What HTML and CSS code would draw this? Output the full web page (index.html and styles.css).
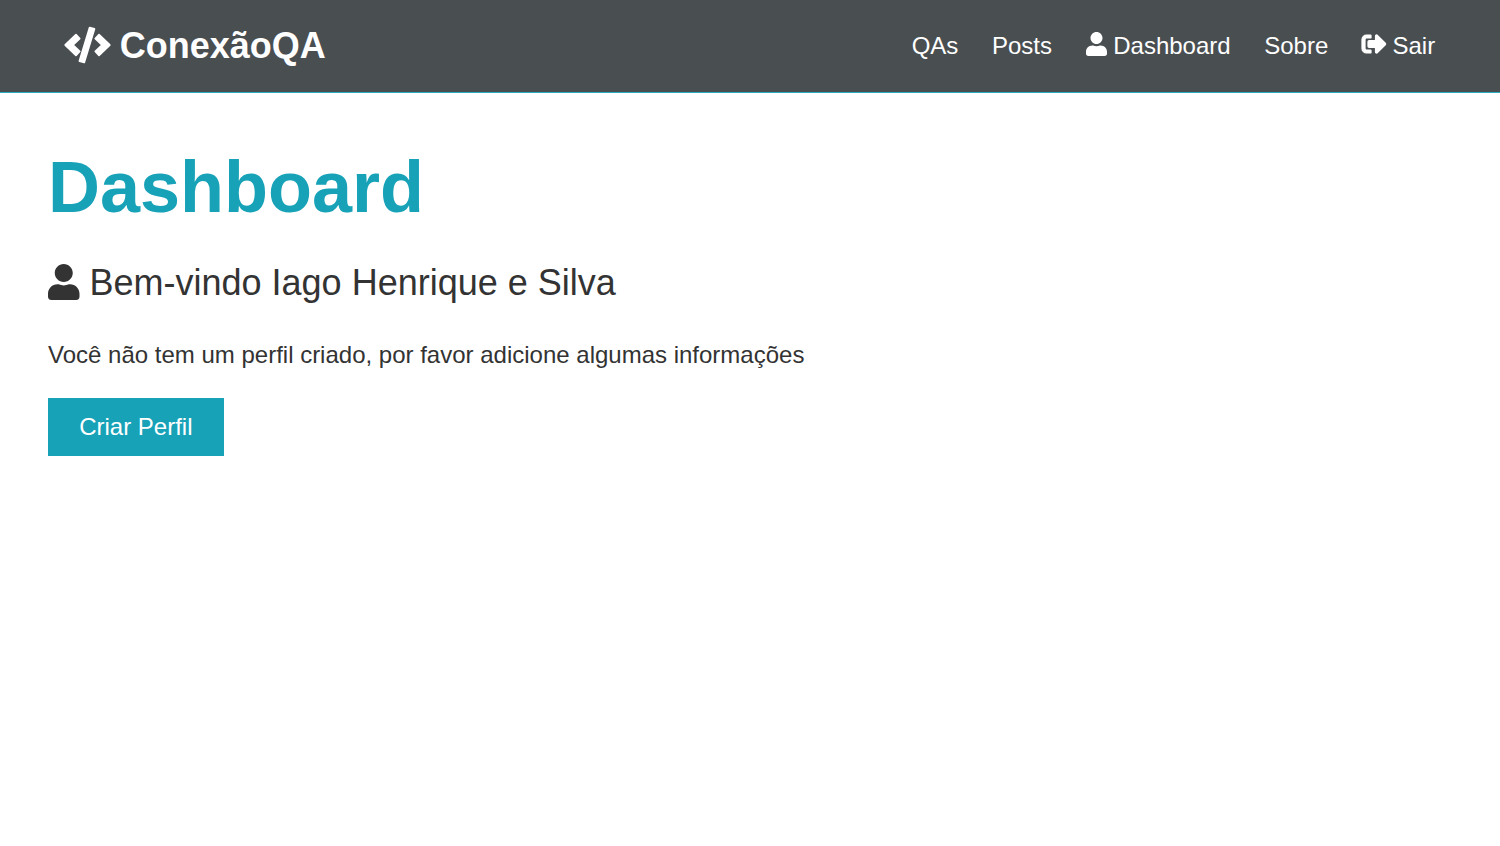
FILE: index.html
```html
<!DOCTYPE html>
<html lang="pt-BR">
<head>
<meta charset="utf-8">
<title>ConexãoQA</title>
<link rel="stylesheet" href="styles.css">
</head>
<body>
<nav class="navbar">
  <h1 class="brand"><a href="#"><svg class="icon icon-code" viewBox="0 0 640 512"><path d="M273 504L206 485L351 8L418 27ZM156 402L4 256L156 110L208 165L111 256L208 347ZM484 402L636 256L484 110L432 165L529 256L432 347Z"/></svg> ConexãoQA</a></h1>
  <ul class="menu">
    <li><a href="#">QAs</a></li>
    <li><a href="#">Posts</a></li>
    <li><a href="#"><svg class="icon icon-user" viewBox="0 0 448 512"><path d="M224 256c70.700 0 128-57.300 128-128S294.700 0 224 0 96 57.300 96 128s57.300 128 128 128zm89.600 32h-16.700c-22.200 10.200-46.900 16-72.900 16s-50.600-5.800-72.900-16h-16.700C60.200 288 0 348.200 0 422.400V464c0 26.500 21.500 48 48 48h352c26.500 0 48-21.500 48-48v-41.600c0-74.200-60.200-134.400-134.400-134.400z"/></svg> Dashboard</a></li>
    <li><a href="#">Sobre</a></li>
    <li><a href="#"><svg class="icon icon-exit" viewBox="0 0 512 512"><path d="M497 273L329 441c-15 15-41 4.500-41-17v-96H152c-13.300 0-24-10.700-24-24v-96c0-13.300 10.700-24 24-24h136V88c0-21.400 25.900-32 41-17l168 168c9.300 9.400 9.300 24.600 0 34zM192 436v-40c0-6.600-5.400-12-12-12H96c-17.700 0-32-14.300-32-32V160c0-17.700 14.300-32 32-32h84c6.600 0 12-5.400 12-12V76c0-6.600-5.400-12-12-12H96c-53 0-96 43-96 96v192c0 53 43 96 96 96h84c6.600 0 12-5.400 12-12z"/></svg> Sair</a></li>
  </ul>
</nav>
<main class="container">
  <h1 class="title">Dashboard</h1>
  <p class="lead"><svg class="icon icon-user" viewBox="0 0 448 512"><path d="M224 256c70.700 0 128-57.300 128-128S294.700 0 224 0 96 57.300 96 128s57.300 128 128 128zm89.600 32h-16.700c-22.200 10.200-46.900 16-72.900 16s-50.600-5.800-72.900-16h-16.700C60.200 288 0 348.200 0 422.400V464c0 26.500 21.500 48 48 48h352c26.500 0 48-21.500 48-48v-41.600c0-74.200-60.200-134.400-134.400-134.400z"/></svg> Bem-vindo Iago Henrique e Silva</p>
  <p class="notice">Você não tem um perfil criado, por favor adicione algumas informações</p>
  <a class="btn" href="#">Criar Perfil</a>
</main>
</body>
</html>
```
FILE: styles.css
```css
* { box-sizing: border-box; margin: 0; padding: 0; }
body {
  font: 24px/1.6 "Liberation Sans", Arial, sans-serif;
  color: #333;
  background: #fff;
}
a { color: inherit; text-decoration: none; }
.icon { display: inline-block; height: 1em; vertical-align: -0.125em; fill: currentColor; overflow: visible; }
.icon-code { width: 1.25em; vertical-align: -0.12em; stroke: currentColor; stroke-width: 26; stroke-linejoin: round; }
.icon-user { width: 0.875em; }
.icon-exit { width: 1em; stroke: currentColor; stroke-width: 26; }
.navbar {
  display: flex;
  justify-content: space-between;
  align-items: center;
  height: 93px;
  padding: 0 48px;
  background: #363b3f;
  color: #fff;
  border-bottom: 1px solid #17a2b8;
  opacity: 0.9;
}
.brand { font-size: 36px; line-height: 57.6px; padding: 0 16.8px; }
.menu { display: flex; list-style: none; }
.menu a { display: block; padding: 0 16.8px; }
.menu .icon { vertical-align: -0.085em; }
.container { padding: 51px 48px; }
.title { font-size: 72px; line-height: 1.2; color: #17a2b8; margin-bottom: 24px; }
.lead { font-size: 36px; margin-bottom: 24px; }
.notice { margin-bottom: 24px; }
.btn {
  display: inline-block;
  padding: 9.6px 31.2px;
  background: #17a2b8;
  color: #fff;
}
```
